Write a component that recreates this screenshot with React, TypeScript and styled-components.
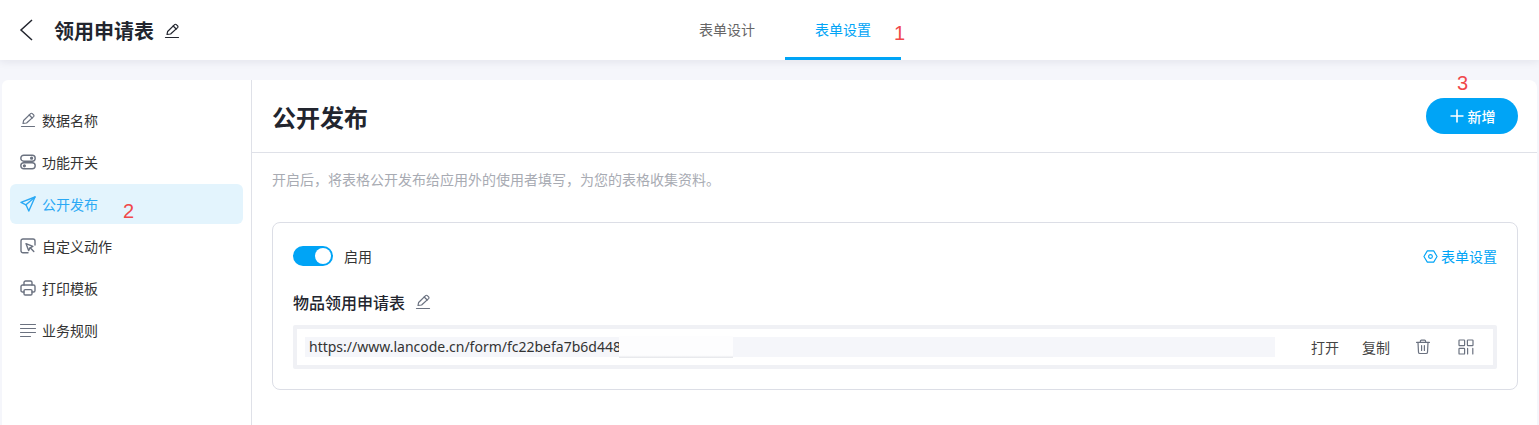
import { ReactNode } from 'react';
import styled, { createGlobalStyle } from 'styled-components';

const BLUE = '#00a4f6';
const ICON_GREY = '#6b7280';

const GlobalStyle = createGlobalStyle`
  html, body {
    margin: 0;
    padding: 0;
    background: #f5f6fb;
  }
  body {
    font-family: "Noto Sans", "Noto Sans CJK SC", sans-serif;
    color: #333;
  }
  * {
    box-sizing: border-box;
  }
`;

const Icon = ({ size = 16, color = ICON_GREY, width = 1.4, children }: { size?: number; color?: string; width?: number; children: ReactNode }) => (
  <svg width={size} height={size} viewBox="0 0 16 16" fill="none" stroke={color} strokeWidth={width} strokeLinecap="round" strokeLinejoin="round">
    {children}
  </svg>
);

const PencilIcon = ({ color }: { color?: string }) => (
  <Icon color={color} size={16} width={1.2}>
    <path d="M1.5 14.5h13" />
    <path d="M3 11.5l.6-3L10.6 1.6a1.2 1.2 0 0 1 1.7 0l1.3 1.3a1.2 1.2 0 0 1 0 1.7L6.6 11l-3.6.5z" />
    <path d="M9.2 3l3 3" />
  </Icon>
);

const SwitchesIcon = () => (
  <Icon>
    <rect x="0.8" y="1.2" width="14.4" height="6" rx="3" />
    <rect x="0.8" y="8.8" width="14.4" height="6" rx="3" />
    <circle cx="11.6" cy="4.2" r="0.9" fill={ICON_GREY} />
    <circle cx="4.4" cy="11.8" r="0.9" fill={ICON_GREY} />
  </Icon>
);

const SendIcon = () => (
  <Icon color="#2aa9f5">
    <path d="M15 1L1 6.4l5 2.4L8.8 15 15 1z" />
    <path d="M15 1L6 8.8" />
  </Icon>
);

const ActionIcon = () => (
  <Icon>
    <path d="M8 14.8H3a2 2 0 0 1-2-2V3a2 2 0 0 1 2-2h10a2 2 0 0 1 2 2v4" />
    <path d="M6 5.6l2.6 7 1.4-2.8 2.9-1.4-6.9-2.8z" />
    <path d="M10.2 9.8l3.6 3.8" />
  </Icon>
);

const PrinterIcon = () => (
  <Icon>
    <path d="M4 5V2.6A1.6 1.6 0 0 1 5.6 1h4.8A1.6 1.6 0 0 1 12 2.6V5" />
    <path d="M4 12H2.6A1.6 1.6 0 0 1 1 10.4V6.6A1.6 1.6 0 0 1 2.6 5h10.8A1.6 1.6 0 0 1 15 6.6v3.8a1.6 1.6 0 0 1-1.6 1.6H12" />
    <rect x="4" y="9.6" width="8" height="5.4" rx="1.2" />
  </Icon>
);

const RulesIcon = () => (
  <Icon width={1.1}>
    <path d="M0.5 2.5h15" />
    <path d="M0.5 6.5h15" />
    <path d="M0.5 10.5h15" />
    <path d="M0.5 14.5h10" />
  </Icon>
);

const TrashIcon = () => (
  <Icon size={16} width={1.2}>
    <path d="M1.6 3.4h12.8" />
    <path d="M5.4 3.2V2.2a1 1 0 0 1 1-1h3.2a1 1 0 0 1 1 1v1" />
    <path d="M3 3.6l.5 9.6a1.4 1.4 0 0 0 1.4 1.3h6.2a1.4 1.4 0 0 0 1.4-1.3l.5-9.6" />
    <path d="M6.6 6.6v4.8M9.4 6.6v4.8" />
  </Icon>
);

const QrIcon = () => (
  <Icon size={16} width={1.2}>
    <rect x="1" y="1" width="5.6" height="5.6" rx="0.6" />
    <rect x="9.4" y="1" width="5.6" height="5.6" rx="0.6" />
    <rect x="1" y="9.4" width="5.6" height="5.6" rx="0.6" />
    <path d="M9.6 9.4V15M14.8 9.4V15" />
  </Icon>
);

const HexIcon = () => (
  <Icon size={15} color={BLUE} width={1.2}>
    <path d="M4.6 2h6.8L15 8l-3.6 6H4.6L1 8z" />
    <circle cx="8" cy="8" r="2" />
  </Icon>
);

const Page = styled.div`
  position: relative;
  width: 1539px;
  height: 425px;
  overflow: hidden;
`;

const TopBar = styled.header`
  position: relative;
  z-index: 1;
  display: flex;
  height: 60px;
  background: #fff;
  box-shadow: 0 2px 8px rgba(20, 30, 60, 0.08);
`;

const TitleGroup = styled.div`
  display: flex;
  align-items: center;
  width: 669px;
  padding-left: 18px;
`;

const BackButton = styled.span`
  display: flex;
  width: 36px;
`;

const PageTitle = styled.h1`
  margin: 0 10px 0 0;
  font-size: 20px;
  font-weight: 700;
  color: #22252e;
`;

const TitleEdit = styled.span`
  display: flex;
  margin-top: 1px;
`;

const Tabs = styled.nav`
  display: flex;
`;

const Tab = styled.div<{ $active?: boolean }>`
  width: 116px;
  height: 60px;
  line-height: 60px;
  text-align: center;
  font-size: 14px;
  color: ${(p) => (p.$active ? BLUE : '#666')};
  border-bottom: 3px solid ${(p) => (p.$active ? BLUE : 'transparent')};
`;

const Body = styled.div`
  display: flex;
  height: 365px;
  padding: 20px 2px 0;
`;

const Sidebar = styled.aside`
  display: flex;
  flex-direction: column;
  gap: 2px;
  flex: 0 0 250px;
  padding: 20px 8px 0;
  background: #fff;
  border-right: 1px solid #dfe1e8;
  border-top-left-radius: 6px;
`;

const NavItem = styled.div<{ $active?: boolean }>`
  display: flex;
  align-items: center;
  gap: 6px;
  height: 40px;
  padding-left: 10px;
  border-radius: 6px;
  font-size: 14px;
  color: ${(p) => (p.$active ? '#2aa9f5' : '#333')};
  background: ${(p) => (p.$active ? '#e3f4fd' : 'transparent')};
`;

const Main = styled.main`
  flex: 1;
  background: #fff;
  border-top-right-radius: 8px;
`;

const MainHeader = styled.div`
  display: flex;
  align-items: center;
  justify-content: space-between;
  height: 73px;
  padding: 0 19px 0 20px;
  border-bottom: 1px solid #dfe1e8;
`;

const MainTitle = styled.h2`
  margin: 0;
  font-size: 24px;
  font-weight: 700;
  color: #22252e;
`;

const AddButton = styled.button`
  display: flex;
  align-items: center;
  justify-content: center;
  gap: 3px;
  width: 92px;
  height: 36px;
  border: 0;
  border-radius: 18px;
  background: ${BLUE};
  color: #fff;
  font: 500 14px "Noto Sans", "Noto Sans CJK SC", sans-serif;
`;

const Hint = styled.p`
  margin: 17px 0 32px 20px;
  font-size: 14px;
  line-height: 20px;
  color: #a8abb3;
`;

const Card = styled.section`
  margin: 0 19px 0 20px;
  height: 168px;
  padding: 23px 20px 20px;
  border: 1px solid #dcdee6;
  border-radius: 8px;
`;

const CardTop = styled.div`
  display: flex;
  align-items: center;
  height: 20px;
`;

const Toggle = styled.span`
  position: relative;
  display: block;
  width: 40px;
  height: 20px;
  border-radius: 10px;
  background: ${BLUE};

  &::after {
    content: '';
    position: absolute;
    top: 2px;
    right: 2px;
    width: 16px;
    height: 16px;
    border-radius: 50%;
    background: #fff;
  }
`;

const ToggleLabel = styled.span`
  margin-left: 11px;
  font-size: 14px;
`;

const SettingsLink = styled.a`
  display: flex;
  align-items: center;
  gap: 3px;
  margin-left: auto;
  font-size: 14px;
  color: ${BLUE};
`;

const CardTitle = styled.div`
  display: flex;
  align-items: center;
  gap: 10px;
  height: 24px;
  margin-top: 24px;
  font-size: 16px;
  font-weight: 500;
  color: #22252e;
`;

const UrlRow = styled.div`
  display: flex;
  align-items: center;
  height: 44px;
  margin-top: 11px;
  padding: 0 17px 0 8px;
  border: 4px solid #f0f1f5;
  border-radius: 2px;
`;

const UrlField = styled.div`
  position: relative;
  width: 970px;
  height: 20px;
  padding-left: 4px;
  background: #f5f6fa;
  font-size: 14px;
  line-height: 20px;
  color: #333;
`;

const UrlMask = styled.span`
  position: absolute;
  top: -1px;
  left: 314px;
  width: 114px;
  height: 22px;
  background: linear-gradient(#fdfdfe 0 88%, #e4e5e9 100%);
  filter: blur(0.6px);
`;

const Actions = styled.div`
  display: flex;
  align-items: center;
  gap: 23px;
  margin-left: 36px;
  font-size: 14px;
  color: #444;
`;

const IconAction = styled.span`
  display: flex;
  justify-content: center;
  width: 20px;
`;

const Marker = styled.span<{ $x: number; $y: number }>`
  position: absolute;
  z-index: 2;
  left: ${(p) => p.$x}px;
  top: ${(p) => p.$y}px;
  font: 20px/24px "Liberation Sans", sans-serif;
  color: #f0484a;
`;

const navItems = [
  { label: '数据名称', icon: <PencilIcon /> },
  { label: '功能开关', icon: <SwitchesIcon /> },
  { label: '公开发布', icon: <SendIcon />, active: true },
  { label: '自定义动作', icon: <ActionIcon /> },
  { label: '打印模板', icon: <PrinterIcon /> },
  { label: '业务规则', icon: <RulesIcon /> },
];

export default function App() {
  return (
    <Page>
      <GlobalStyle />
      <TopBar>
        <TitleGroup>
          <BackButton>
            <svg width="16" height="24" viewBox="0 0 16 24" fill="none" stroke="#22252e" strokeWidth="1.5">
              <path d="M14 2L3 12l11 10" />
            </svg>
          </BackButton>
          <PageTitle>领用申请表</PageTitle>
          <TitleEdit>
            <PencilIcon color="#22252e" />
          </TitleEdit>
        </TitleGroup>
        <Tabs>
          <Tab>表单设计</Tab>
          <Tab $active>表单设置</Tab>
        </Tabs>
      </TopBar>
      <Body>
        <Sidebar>
          {navItems.map((item) => (
            <NavItem key={item.label} $active={item.active}>
              {item.icon}
              {item.label}
            </NavItem>
          ))}
        </Sidebar>
        <Main>
          <MainHeader>
            <MainTitle>公开发布</MainTitle>
            <AddButton>
              <svg width="16" height="16" viewBox="0 0 16 16" stroke="#fff" strokeWidth="1.6">
                <path d="M8 1.5v13M1.5 8h13" />
              </svg>
              新增
            </AddButton>
          </MainHeader>
          <Hint>开启后，将表格公开发布给应用外的使用者填写，为您的表格收集资料。</Hint>
          <Card>
            <CardTop>
              <Toggle />
              <ToggleLabel>启用</ToggleLabel>
              <SettingsLink>
                <HexIcon />
                表单设置
              </SettingsLink>
            </CardTop>
            <CardTitle>
              物品领用申请表
              <PencilIcon />
            </CardTitle>
            <UrlRow>
              <UrlField>
                https://www.lancode.cn/form/fc22befa7b6d44848e
                <UrlMask />
              </UrlField>
              <Actions>
                <span>打开</span>
                <span>复制</span>
                <IconAction>
                  <TrashIcon />
                </IconAction>
                <IconAction>
                  <QrIcon />
                </IconAction>
              </Actions>
            </UrlRow>
          </Card>
        </Main>
      </Body>
      <Marker $x={894} $y={21}>1</Marker>
      <Marker $x={123} $y={199}>2</Marker>
      <Marker $x={1457} $y={71}>3</Marker>
    </Page>
  );
}
